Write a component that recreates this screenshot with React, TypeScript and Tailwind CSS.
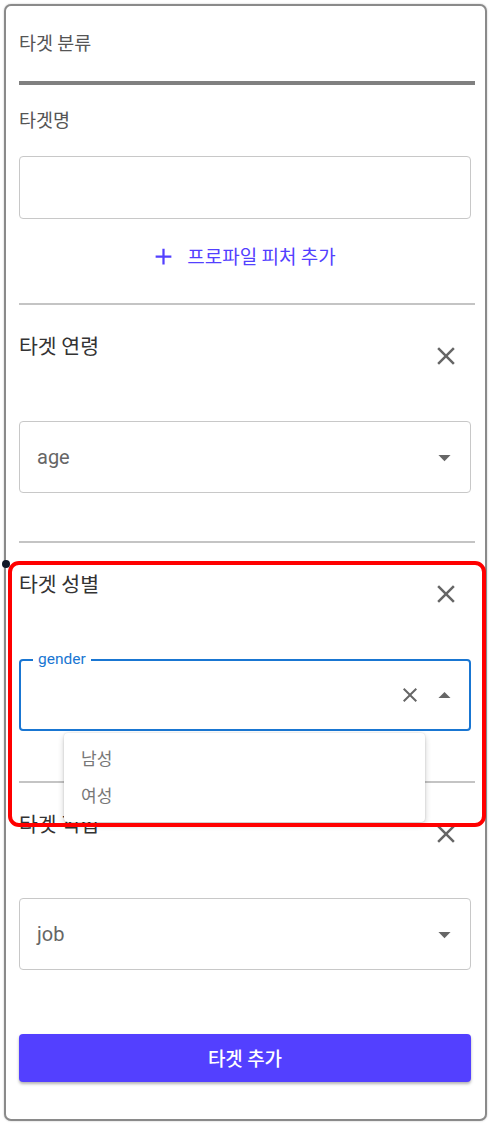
import React from "react";

const KR = "font-['Noto_Sans_CJK_KR','Noto_Sans',sans-serif]";

const CloseIcon = ({ size = 30 }: { size?: number }) => (
    <svg width={size} height={size} viewBox="0 0 24 24" fill="#666">
        <path d="M19 6.41 17.59 5 12 10.59 6.41 5 5 6.41 10.59 12 5 17.59 6.41 19 12 13.41 17.59 19 19 17.59 13.41 12z" />
    </svg>
);

const ArrowDown = () => (
    <svg width="29" height="29" viewBox="0 0 24 24" fill="#666">
        <path d="M7 10l5 5 5-5z" />
    </svg>
);

const ArrowUp = () => (
    <svg width="29" height="29" viewBox="0 0 24 24" fill="#666">
        <path d="M7 14l5-5 5 5z" />
    </svg>
);

const Divider = () => <div className="h-[2px] bg-[#c4c4c4] mr-[-4px]" />;

const SectionHeader = ({ title }: { title: string }) => (
    <div className="flex justify-between items-start mt-[27px]">
        <div className={`${KR} text-[20.5px] leading-[26px] text-[#333]`}>{title}</div>
        <div className="mt-[9px] mr-[10px] w-[30px] h-[30px] flex items-center justify-center">
            <CloseIcon />
        </div>
    </div>
);

const SelectBox = ({ value }: { value: string }) => (
    <div className="h-[72px] border border-[#c8c8c8] rounded-[4px] flex items-center justify-between pl-[17px] pr-[11px]">
        <span className="font-['Roboto',sans-serif] text-[20px] leading-[24px] text-[#666]">{value}</span>
        <ArrowDown />
    </div>
);

export default function App() {
    return (
        <div className="relative w-[492px] h-[1125px] bg-white">
            <div className="pt-[4px] pl-[4px]">
                <div className="w-[483px] border-2 border-[#8a8a8a] rounded-[7px] bg-white pl-[13px] pr-[14px] pt-[24px] pb-[37px] shadow-[0_0_2px_rgba(0,0,0,0.25)]">
                    <div className={`${KR} text-[18.5px] leading-[24px] text-[#555]`}>타겟 분류</div>
                    <div className="mt-[27px] h-[4px] bg-[#808080] mr-[-4px]" />

                    <div className={`${KR} mt-[22px] text-[18.5px] leading-[24px] text-[#555]`}>타겟명</div>
                    <div className="mt-[25px] h-[63px] border border-[#c8c8c8] rounded-[4px]" />

                    <div className="mt-[25px] h-[24px] flex items-center justify-center pr-[4px]">
                        <svg width="27" height="27" viewBox="0 0 24 24" fill="#5340ff">
                            <path d="M19 13h-6v6h-2v-6H5v-2h6V5h2v6h6v2z" />
                        </svg>
                        <span className={`${KR} ml-[10px] text-[19px] leading-[24px] text-[#5340ff]`}>
                            프로파일 피처 추가
                        </span>
                    </div>

                    <div className="mt-[35px]">
                        <Divider />
                    </div>

                    {/* 연령 */}
                    <SectionHeader title="타겟 연령" />
                    <div className="mt-[50px]">
                        <SelectBox value="age" />
                    </div>
                    <div className="mt-[48px]">
                        <Divider />
                    </div>

                    {/* 성별 */}
                    <SectionHeader title="타겟 성별" />
                    <div className="mt-[50px] relative h-[72px] border-2 border-[#1976d2] rounded-[4px] flex items-center justify-end pr-[10px]">
                        <span className="absolute left-[12px] top-[-11px] bg-white px-[5px] font-['Roboto',sans-serif] text-[15.5px] leading-[18px] text-[#1976d2]">
                            gender
                        </span>
                        <div className="mr-[8px]">
                            <CloseIcon size={24} />
                        </div>
                        <ArrowUp />
                    </div>
                    <div className="mt-[50px]">
                        <Divider />
                    </div>

                    {/* 직업 */}
                    <SectionHeader title="타겟 직업" />
                    <div className="mt-[49px]">
                        <SelectBox value="job" />
                    </div>

                    <button className={`${KR} mt-[64px] w-full h-[48px] bg-[#5340ff] rounded-[4px] text-white text-[19px] font-medium shadow-[0_2px_3px_rgba(0,0,0,0.3)]`}>
                        타겟 추가
                    </button>
                </div>
            </div>

            {/* gender dropdown menu */}
            <div className="absolute left-[64px] top-[733px] w-[361px] h-[89px] bg-white rounded-[4px] shadow-[0_3px_6px_rgba(0,0,0,0.2),0_0_2px_rgba(0,0,0,0.15)] pt-[6px]">
                <div className={`${KR} h-[37px] flex items-center pl-[17px] text-[17px] text-[#777]`}>남성</div>
                <div className={`${KR} h-[37px] flex items-center pl-[17px] text-[17px] text-[#777]`}>여성</div>
            </div>

            {/* annotation highlight */}
            <div className="absolute left-[8px] top-[561px] w-[478px] h-[266px] border-4 border-[#ff0000] rounded-[11px] pointer-events-none" />
            <div className="absolute left-[2px] top-[560px] w-[8px] h-[8px] rounded-full bg-[#111827]" />
        </div>
    );
}
